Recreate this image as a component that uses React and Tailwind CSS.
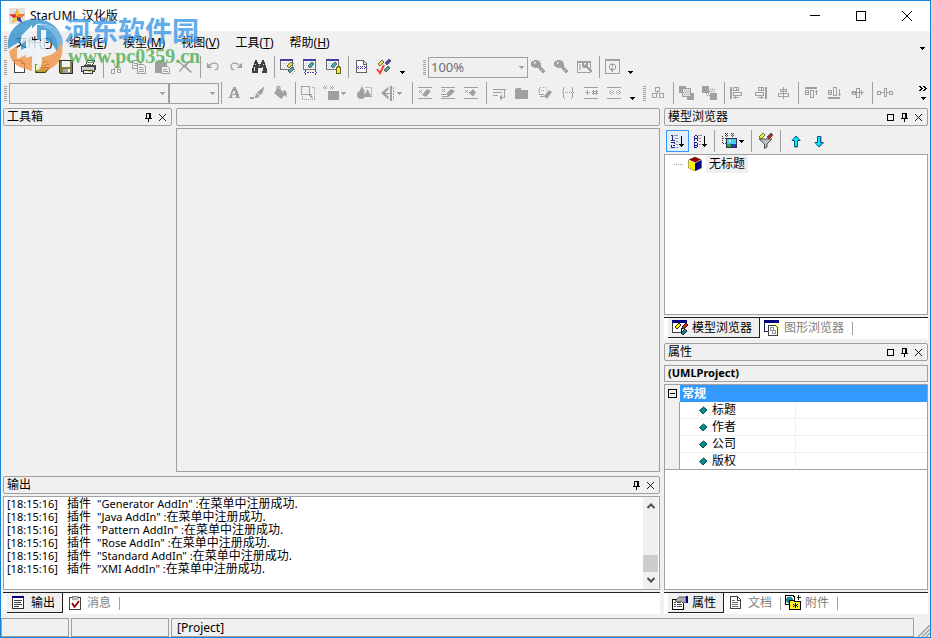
import React from "react";

const G = "#a0a0a0";
const UI = "font-['Noto_Sans','Noto_Sans_CJK_SC',sans-serif]";

function Ico({ children, w = 16, h = 16 }) {
  return (
    <svg width={w} height={h} viewBox={`0 0 ${w} ${h}`} shapeRendering="crispEdges" fill="none" className="block shrink-0" aria-hidden="true">
      {children}
    </svg>
  );
}

const Smooth = ({ children }) => <g shapeRendering="geometricPrecision">{children}</g>;
const Diamond = ({ x, y, r = 3, fill, stroke = "#484848" }) => (
  <path shapeRendering="geometricPrecision" d={`M${x - r} ${y + 1}L${x + 1} ${y - r}L${x + r} ${y - 1}L${x - 1} ${y + r}Z`} fill={fill} stroke={stroke} strokeWidth="0.8" />
);
const WindowBase = () => (
  <>
    <path d="M1 0h13v11h-13z" fill="#f4f4f4" />
    <path d="M1.500 0.500h12v10h-12z" stroke="#707070" />
    <path d="M1 0h13v2h-13z" fill="#4040a8" />
    <path d="M3 4.500h9M2 6.500h10M3 8.500h9" stroke="#c8c8c8" strokeDasharray="1 1" />
  </>
);
const TwoBars = () => <path d="M1 2.500h14M1 13.500h14" stroke={G} />;

const icons = {
  new: <path d="M3.500 1.500h7l3 3v9h-10zM10.500 1.500v3h3" fill="#fff" stroke="#404040" />,
  open: (
    <>
      <path d="M1 5h4l1 1h6v3H5l-3 5H1z" fill="#ffffa0" />
      <path d="M1.500 13V5.500h3l1 1h6V9" stroke="#808040" />
      <Smooth><path d="M1.500 13.500L5.500 8.500h10l-4 5z" fill="#a0a030" stroke="#404010" /></Smooth>
      <path d="M9 3.500h1M10 2.500h3M13 3.500h1M14 4.500h1M12 5.500h3" stroke="#505050" />
    </>
  ),
  save: (
    <>
      <path d="M2.500 1.500h13v13h-12l-1-1z" fill="#808038" stroke="#303030" />
      <path d="M5 2h8v6H5z" fill="#f4f4f4" />
      <path d="M6 10h7v4H6z" fill="#a0a0a0" />
      <path d="M11 10h2v3h-2z" fill="#fff" />
    </>
  ),
  print: (
    <>
      <path d="M5.500 6.500l2-5h7l-2 5z" fill="#fff" stroke="#404040" />
      <path d="M8 3.500h4M7 5.500h4" stroke="#707070" />
      <path d="M1.500 7.500h13v5h-13z" fill="#c8c8c8" stroke="#404040" />
      <path d="M3.500 6.500h12v4l-2 3" stroke="#404040" />
      <path d="M3.500 11.500h9v3h-9z" fill="#eee" stroke="#404040" />
      <path d="M8 12.500h3" stroke="#d8d020" />
    </>
  ),
  cut: (
    <>
      <path d="M5.500 1v3M6.500 4v3M10.500 1v3M9.500 4v3M7.500 7v2M8.500 7v2M6 9.500h1M9 9.500h1" stroke={G} />
      <path d="M3.500 10.500h3v4h-3zM9.500 10.500h3v3h-3z" stroke={G} />
    </>
  ),
  copy: (
    <>
      <path d="M1.500 1.500h6l2 2v6h-8zM3 4.500h4M3 6.500h5" stroke={G} />
      <path d="M6.500 5.500h6l2 2v7h-8z" fill="#f0f0f0" stroke={G} />
      <path d="M8 8.500h4M8 10.500h5M8 12.500h5" stroke={G} />
    </>
  ),
  paste: (
    <>
      <path d="M1 3h3V1h6v2h3v11H1z" fill={G} />
      <path d="M5 3.500h4" stroke="#eee" />
      <path d="M7.500 7.500h6l2 2v5h-8z" fill="#f0f0f0" stroke={G} />
      <path d="M9 10.500h4M9 12.500h5" stroke={G} />
    </>
  ),
  del: <Smooth><path d="M2 2l5 4 6-5 1 1-5 5 6 6-1 1-7-6-4 5-1-1 4-5-5-4z" fill={G} /></Smooth>,
  undo: (
    <>
      <path d="M3 5h1v2h1v1h2v1H2V4h1z" fill={G} />
      <Smooth><path d="M4.500 7.500c2-5 9-4 8.500 0 0 1.500-1 3-3 3.500" stroke={G} strokeWidth="1.200" /></Smooth>
    </>
  ),
  redo: (
    <>
      <path d="M13 5h-1v2h-1v1H9v1h5V4h-1z" fill={G} />
      <Smooth><path d="M11.500 7.500c-2-5-9-4-8.500 0 0 1.500 1 3 3 3.500" stroke={G} strokeWidth="1.200" /></Smooth>
    </>
  ),
  find: (
    <>
      <path d="M4 1h2v2h1v2h3V3h1V1h2v2h1v3h1v3h1v5h-5V9H7v5H1V9h1V6h1V3h1z" fill="#404040" />
      <path d="M4 5h1v1H4zM12 5h1v1h-1zM3 8h1v4H3zM11 8h1v4h-1zM8 6h1v1H8z" fill="#e0e0e0" />
    </>
  ),
  win1: (
    <>
      <WindowBase />
      <Diamond x={11} y={6} r={3} fill="#e8e040" />
      <Diamond x={12} y={11} r={3} fill="#40b0b0" />
      <path d="M14 4h1v1h-1zM15 6h1v1h-1zM14 8h1v1h-1zM15 10h1v1h-1zM15 12h1v1h-1zM13 14h1v1h-1z" fill="#909090" />
    </>
  ),
  win2: (
    <>
      <WindowBase />
      <Diamond x={9} y={6} r={3} fill="#40b0b0" />
      <path d="M1 10h15v6H1z" fill="#f0f0f0" />
      <path d="M1 10.500h13" stroke="#707070" />
      <path d="M3.500 11v2M3.500 14v2M13.500 11v2M13.500 14v2M5 13.500h2M8 13.500h1M10 13.500h2M2 13.500h1M14 13.500h1" stroke="#4040a8" />
    </>
  ),
  win3: (
    <>
      <WindowBase />
      <Diamond x={9} y={6} r={3} fill="#40b0b0" />
      <path d="M11.500 9.500l1-2h2l1 2v5h-4z" fill="#f0e840" stroke="#606020" />
    </>
  ),
  code: (
    <>
      <path d="M3.500 1.500h7l3 3v9h-10zM10.500 2v3h3" fill="#fff" stroke="#606060" />
      <path d="M4 8.500h1M5 7.500h1M5 9.500h1M7 7.500h1M7 9.500h1M8 8.500h1M9 7.500h1M9 9.500h1M11 7.500h1M11 9.500h1M12 8.500h1" stroke="#4040a8" />
    </>
  ),
  check: (
    <>
      <Diamond x={5} y={4} r={3} fill="#e8e040" />
      <Diamond x={12} y={3} r={3} fill="#4848b8" />
      <Diamond x={11} y={10} r={3} fill="#40a8a8" />
      <Smooth><path d="M1 10l3 4L8 6" stroke="#f04040" strokeWidth="2" /></Smooth>
    </>
  ),
  zoomIn: (
    <>
      <path d="M4 1h4v1h2v2h1v4h1v1h1v1h1v1h1v2h-1v1h-2v-1h-1v-1h-1v-1H9V9H4V8H2V7H1V3h1V2h2z" fill={G} />
      <path d="M4 3h2v1H5v1H4zM11 11h1v1h-1z" fill="#f0f0f0" />
    </>
  ),
  zoomFit: (
    <>
      <path d="M1.500 2.500h13v11h-13z" fill="#f0f0f0" stroke={G} />
      <path d="M1 2h14v2H1z" fill={G} />
      <path d="M7 3h4v1h1v4h1v1h1v1h1v1h1v2h-2v-1h-1v-1h-1v-1h-1V9H7V8H6V4h1z" fill={G} />
      <path d="M8 4h2v1H9v1H8z" fill="#f0f0f0" />
      <path d="M3 5h2v6H3z" fill="#c4c4c4" />
    </>
  ),
  refresh: (
    <>
      <path d="M1.500 0.500h14v14h-14zM2 1.500h13" stroke={G} />
      <path d="M6 5.500h5M11.500 6v4M5.500 6v4M8 4.500h1M8.500 3.500v4M6 10.500h5M8.500 9v4M7.500 9v3" stroke={G} />
    </>
  ),
  fontA: (
    <>
      <path d="M7 2h3v2h1v2h1v3h1v3h1v1H9v-1h1v-2H6v2h1v1H2v-1h2V9h1V6h1V4h1z" fill={G} />
      <path d="M7 6h2v3H6V8h1z" fill="#f0f0f0" />
    </>
  ),
  brush: <Smooth><path d="M15.500 1L13.500 8l-5 5H5.500l2-5zM1 12h4v2H1z" fill={G} /><path d="M7.500 8l4 3" stroke="#eee" /></Smooth>,
  fill: <Smooth><path d="M6 3l8 6-5 5-7-6z" fill={G} /><path d="M5 8V3c0-2 3-2 3 0v4" stroke={G} strokeWidth="1.300" /><path d="M11 5c4 0 4 3 3.500 8l-2-4z" fill={G} /></Smooth>,
  select: (
    <>
      <path d="M1.500 1.500h8v8h-8z" stroke={G} />
      <path d="M12 2.500h3M14.500 3v12M2.500 11v4M2 14.500h13" stroke={G} strokeDasharray="1 1" />
      <path d="M9 9h3v1h-1v1h1v1h1v1h-2v-1h-1v-1H9z" fill={G} />
    </>
  ),
  stereo: (
    <>
      <path d="M1 1h1v1H1zM3 1h1v1H3zM0 2h1v1H0zM2 2h1v1H2zM1 3h1v1H1zM3 3h1v1H3zM7 1h1v1H7zM9 1h1v1H9zM8 2h1v1H8zM10 2h1v1h-1zM7 3h1v1H7zM9 3h1v1H9z" fill={G} />
      <path d="M5 6h11v9H5z" fill={G} />
    </>
  ),
  shapes: (
    <Smooth>
      <path d="M6 1l3 6H3z" fill={G} /><circle cx="5" cy="10" r="4" fill={G} />
      <path d="M9.500 2.500h6v9h-6" stroke={G} strokeDasharray="2 1" /><path d="M11.500 4l4 8H8z" fill={G} />
    </Smooth>
  ),
  flip: (
    <>
      <path d="M11 1h2v15h-2z" fill={G} />
      <path d="M14.500 2v13" stroke={G} strokeDasharray="2 1" />
      <Smooth><path d="M9.500 1.500v3L6 8l3.500 3.500v3L2 8z" fill={G} /></Smooth>
      <path d="M6 8.500h5" stroke={G} />
    </>
  ),
  line1: <><TwoBars /><path d="M2 5h1v1H2zM4 5h1v1H4zM3 6h1v1H3zM2 7h1v1H2zM4 7h1v1H4z" fill={G} /><Smooth><path d="M5 10L10 4l4 2-5 6z" fill={G} /></Smooth></>,
  line2: <><TwoBars /><path d="M2 4h1v1H2zM4 4h1v1H4zM3 5h1v1H3zM2 6h1v1H2zM4 6h1v1H4zM1 9h5v1H1zM2 11h6v1H2z" fill={G} /><Smooth><path d="M6 9l5-5 4 2-6 6z" fill={G} /></Smooth></>,
  line3: <><TwoBars /><path d="M2 5h1v1H2zM4 5h1v1H4zM3 6h1v1H3zM2 7h1v1H2zM4 7h1v1H4zM6 7h1v1H6z" fill={G} /><Smooth><path d="M10 4l3 3.500-3 4-4-3.500z" fill={G} /></Smooth></>,
  wrap: <path d="M2 4.500h13M2 7.500h9M2 10.500h5M13.500 5v7M9 12.500h5M10.500 10v5M9.500 11v3" stroke={G} />,
  folder: <path d="M1 4h1V3h5v2h7v9H1z" fill={G} />,
  brace1: <><path d="M3 2h1v1H3zM2 3h1v2H2zM1 5h1v1H1zM2 6h1v2H2zM6 2h1v1H6zM8 2h1v1H8zM9 4h1v1H9zM4 5h1v1H4zM6 5h1v1H6zM2 9h5v1H2zM3 11h5v1H3z" fill={G} /><Smooth><path d="M7 11l5-6 3 2-5 7z" fill={G} /></Smooth></>,
  brace2: <><path d="M3.500 3v4M2 7.500h1M3.500 8v5M12.500 3v4M13 7.500h1M12.500 8v5M4 2.500h1M11 2.500h1M4 13.500h1M11 13.500h1" stroke={G} /><path d="M5 7.500h7" stroke={G} strokeDasharray="1 1" /></>,
  plusHash: <><TwoBars /><path d="M2 7.500h5M4.500 5v5M9 6.500h6M9 8.500h6M10.500 5v5M13.500 5v5" stroke={G} /></>,
  angles: <><TwoBars /><path d="M5 5.500h1M4 6.500h1M3 7.500h1M4 8.500h1M5 9.500h1M7 6.500h1M6 7.500h1M7 8.500h1M10 6.500h1M11 7.500h1M10 8.500h1M12 5.500h1M13 6.500h1M14 7.500h1M13 8.500h1M12 9.500h1" stroke={G} /></>,
  boxes: <path d="M5.500 2.500h4v4h-4zM2.500 8.500h4v4h-4zM9.500 8.500h4v4h-4zM7.500 7v2" stroke={G} />,
  front: (
    <>
      <path d="M1 1h7v7H1zM9 8h7v7H9z" fill={G} />
      <path d="M4 4h9v8H4z" fill="#e4e4e4" /><path d="M4 5.500h9M5 7.500h8M4 9.500h9M5 11.500h8" stroke={G} strokeDasharray="1 1" /><path d="M4.500 3.500h8v8h-8z" stroke={G} />
    </>
  ),
  back: (
    <>
      <path d="M5 3h9v9H5z" fill="#e4e4e4" /><path d="M5 4.500h9M6 6.500h8M5 8.500h9M6 10.500h8" stroke={G} strokeDasharray="1 1" />
      <path d="M1 1h7v7H1zM9 8h7v7H9z" fill={G} />
    </>
  ),
  alLeft: <><path d="M1 2h2v12H1z" fill={G} /><path d="M4.500 2.500h5v3h-5zM7 2v4M4.500 7.500h8v3h-8zM4 12.500h6M6.500 11v3" stroke={G} /></>,
  alRight: <><path d="M13 2h2v12h-2z" fill={G} /><path d="M6.500 2.500h5v3h-5zM9 2v4M3.500 7.500h8v3h-8zM6 12.500h6M9.500 11v3" stroke={G} /></>,
  alCenter: <path d="M8.500 2v12M5.500 4.500h6v2h-6zM3.500 8.500h10v3h-10z" stroke={G} />,
  alTop: <><path d="M2 2h12v2H2z" fill={G} /><path d="M2.500 5.500h3v4h-3zM2 7h4M7.500 5.500h3v7h-3zM13.500 5v5M12 6.500h3" stroke={G} /></>,
  alBottom: <><path d="M2 12h12v2H2z" fill={G} /><path d="M2.500 5.500h3v4h-3zM2 7.500h4M7.500 2.500h3v8h-3zM13.500 4v7M12 9.500h3" stroke={G} /></>,
  alMid: <path d="M2 7.500h13M3.500 6.500h3v3h-3zM7.500 3.500h3v9h-3zM12.500 5v5" stroke={G} />,
  space: <path d="M0.500 6.500h3v3h-3zM4 7.500h3M7.500 3.500h2v8h-2zM10 7.500h2M12.500 6.500h3v3h-3z" stroke={G} />,
  sortNum: (
    <>
      <path d="M3 2.500h2M4.500 2v5M3 7.500h4M3 9.500h3M6.500 9v2M4.500 12h2M3.500 12v3M3 14.500h4" stroke="#202090" />
      <path d="M6 2.500h4M7 5.500h3M8 8.500h2M8 11.500h2M8 14.500h2" stroke="#909090" />
      <path d="M13.500 3v11M11 11.500h5M12 12.500h3" stroke="#000" />
    </>
  ),
  sortAlpha: (
    <>
      <path d="M3.500 3v5M6.500 3v5M4 2.500h2M4 5.500h2M3.500 9v6M4 9.500h2M4 12.500h2M4 14.500h2M6.500 10v4" stroke="#202090" />
      <path d="M7 2.500h4M8 5.500h2M8 8.500h2M8 11.500h2" stroke="#909090" />
      <path d="M13.500 3v11M11 11.500h5M12 12.500h3" stroke="#000" />
    </>
  ),
  image: (
    <>
      <path d="M4 0h1v1H4zM6 0h1v1H6zM5 1h1v1H5zM4 2h1v1H4zM6 2h1v1H6zM5 3h1v1H5zM10 0h1v1h-1zM12 0h1v1h-1zM11 1h1v1h-1zM10 2h1v1h-1zM12 2h1v1h-1zM11 3h1v1h-1z" fill="#404040" />
      <path d="M1.500 3v8M2 5.500h3M2 10.500h3" stroke="#404040" strokeDasharray="1 1" />
      <path d="M5.500 5.500h10v9h-10z" fill="#40d0f8" stroke="#303050" />
      <path d="M6 11h9v3H6z" fill="#30a050" /><path d="M10 11h5v3h-5z" fill="#2040b0" /><path d="M8 7h2v2H8z" fill="#f8f060" />
    </>
  ),
  filter: (
    <>
      <Diamond x={5} y={3} r={3} fill="#f8f020" /><Diamond x={13} y={3} r={3} fill="#c02020" />
      <Smooth><path d="M2 6h13L10 11v3L7.500 15.500V11z" fill="#c0c0c0" stroke="#404040" strokeWidth="0.900" /></Smooth>
    </>
  ),
  up: <><path d="M10 4h1v3h2v1h-3v7H6v-1h4z" fill="#b0b0b0" /><Smooth><path d="M8 3l4 4.500H9.500v6h-3v-6H4z" fill="#00f0f8" stroke="#004080" strokeWidth="0.900" /></Smooth></>,
  down: <><path d="M10 3h1v6h2v2h-2v2h-1z" fill="#b0b0b0" /><Smooth><path d="M8 14L4 9.500h2.500v-6h3v6H12z" fill="#00f0f8" stroke="#004080" strokeWidth="0.900" /></Smooth></>,
  cube: (
    <Smooth>
      <path d="M8 1l6 2.500L8 6.500 2 3.500z" fill="#900000" /><path d="M1.500 4L8 7v8l-6.500-3z" fill="#f8f000" /><path d="M14.500 4L8 7v8l6.500-3z" fill="#000080" />
      <path d="M1.500 4L8 1l6.500 3v8L8 15l-6.500-3z" stroke="#404020" strokeWidth="0.400" />
    </Smooth>
  ),
  model: (
    <>
      <path d="M0 0h15v3H0z" fill="#000080" /><path d="M0.500 3v9h8" stroke="#404040" /><path d="M1 3h13v9H1z" fill="#fff" />
      <Diamond x={6} y={6} r={3} fill="#f8f000" stroke="#000" /><Diamond x={13} y={6} r={3} fill="#d02020" stroke="#000" /><Diamond x={12} y={12} r={3} fill="#009090" stroke="#000" />
      <path d="M9 8.500h2M9.500 9v3" stroke="#000" />
    </>
  ),
  diagram: (
    <>
      <path d="M0 0h15v3H0z" fill="#000080" /><path d="M0.500 3v8h4" stroke="#202060" /><path d="M8 4h7v8H8z" fill="#ffff90" />
      <path d="M4.500 5.500h7l2 2v8h-9z" fill="#fff" stroke="#404040" /><path d="M6.500 7.500h3v3h-3zM8.500 10.500h3v3h-3z" stroke="#909090" />
    </>
  ),
  props: (
    <>
      <path d="M0.500 4.500h11v10h-11z" fill="#fff" stroke="#000" /><path d="M2 7.500h2M5 7.500h4M2 9.500h2M5 9.500h5M2 11.500h2M5 11.500h5" stroke="#404040" />
      <Smooth><path d="M3 6l4-4h7v5l-3 1-2-2-2 1z" fill="#b0b0b0" stroke="#404040" strokeWidth="0.800" /></Smooth><path d="M14 1h2v7h-2z" fill="#000080" />
    </>
  ),
  doc: <><path d="M2.500 1.500h7l3 3v9h-10zM9.500 2v3h3" fill="#fff" stroke="#404040" /><path d="M4 5.500h3M4 7.500h6M4 9.500h6M4 11.500h6" stroke="#707070" /></>,
  attach: (
    <>
      <path d="M0.500 0.500h8l1 2v7h-9z" fill="#fff" stroke="#000" /><Smooth><circle cx="4.500" cy="5" r="3" fill="#2080d0" stroke="#208040" /></Smooth>
      <path d="M4.500 5.500h4l1 1h6v8h-11z" fill="#f8f020" stroke="#000" /><path d="M12 2.500h4M13.500 0v5" stroke="#000" />
      <path d="M8 9h1v1H8zM10 8h1v5h-1zM12 9h1v1h-1zM8 11h1v1H8zM12 11h1v1h-1zM9 10h3v1H9z" fill="#000080" />
    </>
  ),
  output: <><path d="M1.500 1.500h11v12h-11z" fill="#fff" stroke="#303030" /><path d="M1 1h12v2H1z" fill="#000080" /><path d="M3 5.500h8M3 7.500h7M3 9.500h8M3 11.500h5" stroke="#404040" /></>,
  message: <><path d="M2.500 2.500h11v12h-11z" fill="#fff" stroke="#404040" /><path d="M5 1h6v3H5z" fill="#c0c0c0" stroke="#606060" strokeWidth="0.500" /><Smooth><path d="M5 8l2.500 4L12 6" stroke="#900000" strokeWidth="1.800" /></Smooth></>,
};

const Down = ({ color = "#000" }) => (
  <Ico w={5} h={3}><path d="M0 0h5v1H4v1H3v1H2V2H1V1H0z" fill={color} /></Ico>
);

function Tool({ icon, label, active }) {
  return (
    <button type="button" aria-label={label} className={active ? "flex h-[22px] w-[23px] items-center border border-[#3399ff] bg-[#e4eef8] pl-px" : "flex h-6 w-[23px] items-center pl-[2px]"}>
      <Ico>{icons[icon]}</Ico>
    </button>
  );
}
const DropTool = ({ icon, label }) => (
  <button type="button" aria-label={label} className="flex h-6 w-[33px] items-center gap-[2px] pl-[2px]">
    <Ico>{icons[icon]}</Ico><Down color={G} />
  </button>
);
const Sep = () => <span className="flex h-[22px] w-[5px] justify-center"><i className="w-px bg-[#a0a0a0]" /></span>;
const Grip = () => <span className="mr-[2px] h-[15px] w-[3px] shrink-0 bg-[repeating-linear-gradient(#a0a0a0_0_1px,transparent_1px_2px)]" />;
const More = () => <button type="button" aria-label="更多按钮" className="flex h-6 w-[10px] items-end justify-center pb-[5px]"><Down /></button>;

function Combo({ label, value, className }) {
  return (
    <span className={`relative block h-[21px] ${className}`}>
      <select aria-label={label} className="block h-full w-full appearance-none border border-[#a0a0a0] bg-[#f0f0f0] pl-[2px] text-[13px] leading-[17px] text-[#6d6d6d]">
        <option>{value}</option>
      </select>
      <span className="pointer-events-none absolute top-[9px] right-1"><Down color={G} /></span>
    </span>
  );
}
const Tools = ({ items }) => items.map((t) => <Tool key={t[0]} icon={t[0]} label={t[1]} />);

function PanelHead({ title, max, plain }) {
  return (
    <div className="flex h-[18px] shrink-0 items-center rounded-[2px] border border-[#a0a0a0] pr-1 pl-[3px] text-xs leading-4">
      <h2 className="flex-1">{title}</h2>
      {!plain && (
        <span className="flex items-center gap-[5px]">
          {max && <button type="button" aria-label="最大化"><Ico w={9} h={9}><path d="M1.500 1.500h6v6h-6z" stroke="#000" /></Ico></button>}
          <button type="button" aria-label="自动隐藏"><Ico w={9} h={9}><path d="M2 0.500h5M2.500 0v5M5.500 0v5M6.500 0v5M1 5.500h7M4.500 6v3" stroke="#000" /></Ico></button>
          <button type="button" aria-label="关闭"><Ico w={9} h={9}><path shapeRendering="geometricPrecision" d="M1 1l7 7M8 1l-7 7" stroke="#000" strokeWidth="0.900" /></Ico></button>
        </span>
      )}
    </div>
  );
}

function Tabs({ label, tabs }) {
  return (
    <div role="tablist" aria-label={label} className="flex h-[22px] shrink-0 border-t border-[#202020] bg-white pl-1 text-xs">
      {tabs.map(([icon, text], i) =>
        i === 0 ? (
          <button key={text} type="button" role="tab" aria-selected="true" className="flex h-5 items-center gap-1 border-r border-b border-[#202020] bg-[#f0f0f0] pr-[7px] pl-1"><Ico>{icons[icon]}</Ico>{text}</button>
        ) : (
          <button key={text} type="button" role="tab" aria-selected="false" className="flex h-5 items-center gap-1 pl-1 text-[#808080]"><Ico>{icons[icon]}</Ico><span className="flex h-[13px] items-center border-r border-[#a0a0a0] pr-2">{text}</span></button>
        )
      )}
    </div>
  );
}

const menus = [["文件", "F"], ["编辑", "E"], ["模型", "M"], ["视图", "V"], ["工具", "T"], ["帮助", "H"]];
const addins = ["Generator", "Java", "Pattern", "Rose", "Standard", "XMI"];

function Watermark() {
  return (
    <div className="pointer-events-none absolute top-[11px] left-[5px] flex opacity-80" aria-hidden="true">
      <svg width="58" height="62" viewBox="0 0 58 62" className="shrink-0">
        <path d="M2 37C0 20 12 7 29 7c11 0 20 5 25 14-6-7-14-10-23-9L18 24v4L8 33z" fill="#2f8fcd" />
        <path d="M23 16l-8 8v14l8-4zM31 13c14 0 23 8 23 18 0 4-1 7-3 10-2-8-8-13-16-13h-4z" fill="#2f8fcd" />
        <path d="M56 25c2 7 0 14-4 19 0-8 0-15-4-21-4-6-10-9-17-10 11-3 21 2 25 12z" fill="#58a8dc" />
        <path d="M15 24l11-11v16h9V18h5v24c0 9-3 14-9 17V36h-5v9h-6V28l-5 5z" fill="#eaf5fc" />
        <path d="M3 39l8-5v13l9-4v14C10 55 4 49 3 39z" fill="#f09444" />
        <path d="M20 46l6-2v15l-6-2zM36 45c10-1 17-6 19-15 5 15-4 28-22 30 2-4 3-9 3-15z" fill="#f09444" />
      </svg>
      <div className="flex flex-col pt-[2px] whitespace-nowrap">
        <span className="font-['Noto_Sans_CJK_SC',sans-serif] text-[27px] leading-[31px] font-bold text-[#3d9be6]">河东软件园</span>
        <span className="pl-1 font-['Liberation_Serif',serif] text-[20px] leading-[22px] font-bold text-[#4fae50]">www.pc0359.cn</span>
      </div>
    </div>
  );
}

export default function App() {
  return (
    <div className={`relative flex h-screen flex-col overflow-hidden border border-[#1883d7] bg-[#f0f0f0] text-black ${UI}`}>
      <header className="flex h-[30px] shrink-0 items-center bg-white pl-2">
        <span className="bg-[#e4e0e0]">
          <Ico><Smooth>
            <path d="M8 1l2 5 6 .5-4.500 3.500L13 15l-5-3-5 3 1.500-5L0 6.500 6 6z" fill="#e03030" />
            <path d="M8 1L6 6l2 3 2-3z" fill="#f8c020" /><path d="M16 6.500L10 6l-2 3 3.500 1z" fill="#f08020" /><path d="M3 15l5-3v-3l-3.500 1z" fill="#f8d030" /><path d="M13 15l-5-3v-3l3.500 1z" fill="#4040a0" />
          </Smooth></Ico>
        </span>
        <h1 className="flex-1 pl-[5px] text-xs">StarUML 汉化版</h1>
        <button type="button" aria-label="最小化" className="flex h-full w-[46px] items-center justify-center"><Ico w={10} h={10}><path d="M0 4.500h10" stroke="#000" /></Ico></button>
        <button type="button" aria-label="最大化" className="flex h-full w-[46px] items-center justify-center"><Ico w={10} h={10}><path d="M0.500 0.500h9v9h-9z" stroke="#000" /></Ico></button>
        <button type="button" aria-label="关闭" className="flex h-full w-[46px] items-center justify-center"><Ico w={10} h={10}><path shapeRendering="geometricPrecision" d="M0 0l10 10M10 0L0 10" stroke="#000" /></Ico></button>
      </header>

      <nav aria-label="主菜单" className="flex h-6 shrink-0 items-center pr-[3px] pl-[3px] text-xs">
        <Grip />
        <div className="flex flex-1 gap-4 pl-[6px]">
          {menus.map(([name, key]) => <button key={key} type="button" className="min-w-[38px] text-left whitespace-nowrap">{name}(<u>{key}</u>)</button>)}
        </div>
        <More />
      </nav>

      <div role="toolbar" aria-label="标准" className="flex h-6 shrink-0 items-center pl-[3px]">
        <Grip />
        <Tools items={[["new", "新建"], ["open", "打开"], ["save", "保存"], ["print", "打印"]]} /><Sep />
        <Tools items={[["cut", "剪切"], ["copy", "复制"], ["paste", "粘贴"], ["del", "删除"]]} /><Sep />
        <Tools items={[["undo", "撤销"], ["redo", "重做"], ["find", "查找"]]} /><Sep />
        <Tools items={[["win1", "元素"], ["win2", "约束"], ["win3", "标记值"]]} /><Sep />
        <Tools items={[["code", "文档"], ["check", "验证模型"]]} /><More />
        <span className="w-4" />
        <Grip />
        <Combo label="缩放" value="100%" className="w-[100px]" />
        <Tool icon="zoomIn" label="放大" /><Tool icon="zoomIn" label="缩小" /><Tool icon="zoomFit" label="适合窗口" /><Sep />
        <Tool icon="refresh" label="刷新" /><More />
      </div>

      <div role="toolbar" aria-label="格式" className="flex h-7 shrink-0 items-center pr-[2px] pl-[3px]">
        <Grip />
        <Combo label="字体" value="" className="w-[160px]" />
        <Combo label="字号" value="" className="w-[50px]" /><Sep />
        <Tools items={[["fontA", "字体"], ["brush", "线条颜色"], ["fill", "填充颜色"]]} /><Sep />
        <Tool icon="select" label="自动调整" /><DropTool icon="stereo" label="构造型显示" /><Tool icon="shapes" label="形状" /><DropTool icon="flip" label="线型" /><Sep />
        <Tools items={[["line1", "隐藏属性"], ["line2", "隐藏操作"], ["line3", "隐藏文字"]]} /><Sep />
        <Tools items={[["wrap", "自动换行"], ["folder", "显示父级"], ["brace1", "显示操作"], ["brace2", "显示特性"], ["plusHash", "显示可见性"], ["angles", "显示构造型"]]} /><More />
        <span className="w-[6px]" />
        <Grip />
        <Tool icon="boxes" label="自动布局" /><Sep />
        <Tools items={[["front", "置于顶层"], ["back", "置于底层"]]} /><Sep />
        <Tools items={[["alLeft", "左对齐"], ["alRight", "右对齐"], ["alCenter", "水平居中"]]} /><Sep />
        <Tools items={[["alTop", "顶端对齐"], ["alBottom", "底端对齐"], ["alMid", "垂直居中"]]} /><Sep />
        <Tool icon="space" label="等间距" />
        <button type="button" aria-label="更多工具" className="ml-auto flex flex-col items-center gap-[5px]">
          <Ico w={9} h={6}><path d="M0 0.500h2M1 1.500h2M2 2.500h2M1 3.500h2M0 4.500h2M4 0.500h2M5 1.500h2M6 2.500h2M5 3.500h2M4 4.500h2" stroke="#000" /></Ico><Down />
        </button>
      </div>

      <div className="flex min-h-0 flex-1 gap-1 px-[2px] pt-px pb-1">
        <div className="flex min-w-0 flex-1 flex-col gap-1">
          <div className="flex min-h-0 flex-1 gap-1">
            <aside className="w-[169px] shrink-0"><PanelHead title="工具箱" /></aside>
            <main className="flex min-w-0 flex-1 flex-col gap-[2px]">
              <PanelHead title="" plain />
              <div className="flex-1 border border-[#a0a0a0]" />
            </main>
          </div>
          <section className="flex h-[138px] shrink-0 flex-col">
            <PanelHead title="输出" />
            <div className="mt-[2px] mb-[2px] flex min-h-0 flex-1 border border-[#a0a0a0] bg-white">
              <ol className="flex-1 overflow-hidden pl-[3px] text-[11px] leading-[13px]">
                {addins.map((name) => (
                  <li key={name} className="flex h-[13px] whitespace-nowrap">
                    <span className="w-[60px]">[18:15:16]</span>
                    <span className="w-[30px] text-xs leading-[13px]">插件</span>
                    <span>"{name} AddIn" :<span className="text-xs leading-[13px]">在菜单中注册成功.</span></span>
                  </li>
                ))}
              </ol>
              <div className="mr-px flex w-[15px] flex-col items-center bg-[#f0f0f0] py-[6px]">
                <Ico w={8} h={6}><path shapeRendering="geometricPrecision" d="M0.500 5L4 1.500 7.500 5" stroke="#505050" strokeWidth="2" /></Ico>
                <span className="flex-1" />
                <span className="mb-[5px] h-[17px] w-full bg-[#cdcdcd]" />
                <Ico w={8} h={6}><path shapeRendering="geometricPrecision" d="M0.500 1L4 4.500 7.500 1" stroke="#505050" strokeWidth="2" /></Ico>
              </div>
            </div>
            <Tabs label="输出" tabs={[["output", "输出"], ["message", "消息"]]} />
          </section>
        </div>

        <div className="flex w-[264px] shrink-0 flex-col gap-1">
          <section className="flex h-[231px] shrink-0 flex-col">
            <PanelHead title="模型浏览器" max />
            <div role="toolbar" aria-label="模型浏览器" className="flex h-7 shrink-0 items-center pt-[2px] pl-[2px]">
              <Tool icon="sortNum" label="按存储顺序排序" active /><Tool icon="sortAlpha" label="按字母排序" /><Sep />
              <button type="button" aria-label="构造型显示" className="flex h-6 w-8 items-center gap-[2px] pl-1"><Ico>{icons.image}</Ico><Down /></button><Sep />
              <span className="w-px" /><Tool icon="filter" label="筛选" /><Sep />
              <span className="w-[3px]" /><Tool icon="up" label="上移" /><Tool icon="down" label="下移" />
            </div>
            <ul role="tree" aria-label="模型" className="mb-[2px] flex-1 border border-[#a0a0a0] bg-white text-xs">
              <li role="treeitem" className="flex h-[18px] items-center pl-[9px]">
                <span className="h-px w-[10px] bg-[repeating-linear-gradient(90deg,#a0a0a0_0_1px,transparent_1px_2px)]" />
                <span className="px-[3px]"><Ico>{icons.cube}</Ico></span>
                <span className="h-[18px] bg-[#f0f0f0] px-[3px] leading-[18px]">无标题</span>
              </li>
            </ul>
            <Tabs label="浏览器" tabs={[["model", "模型浏览器"], ["diagram", "图形浏览器"]]} />
          </section>

          <section className="flex min-h-0 flex-1 flex-col">
            <PanelHead title="属性" max />
            <div className="mt-1 h-[17px] shrink-0 border border-[#a0a0a0] pl-[3px] text-[11px] leading-[14px] font-bold">(UMLProject)</div>
            <div className="mt-[2px] mb-[2px] min-h-0 flex-1 border border-[#a0a0a0] bg-white">
              <table className="w-full table-fixed border-separate border-spacing-0 text-xs">
                <colgroup><col className="w-[15px]" /><col className="w-[116px]" /><col /></colgroup>
                <tbody>
                  <tr className="h-[17px]">
                    <td className="bg-[#f0f0f0] p-0 pl-[3px]"><button type="button" aria-label="折叠" className="block"><Ico w={9} h={9}><path d="M0.500 0.500h8v8h-8zM2 4.500h5" stroke="#000" /></Ico></button></td>
                    <th colSpan={2} scope="rowgroup" className="bg-[#3399ff] p-0 pl-[2px] text-left leading-4 font-bold text-white">常规</th>
                  </tr>
                  {["标题", "作者", "公司", "版权"].map((name, i) => (
                    <tr key={name} className="h-[17px]">
                      <td className={i === 3 ? "border-r border-b border-[#a0a0a0] bg-[#f0f0f0] p-0" : "border-r border-[#a0a0a0] bg-[#f0f0f0] p-0"} />
                      <th scope="row" className={`border-r border-b border-r-[#f0f0f0] p-0 pl-[19px] text-left leading-4 font-normal ${i === 3 ? "border-b-[#a0a0a0]" : "border-b-[#f0f0f0]"}`}>
                        <span className="flex items-center gap-1"><Ico w={9} h={9}><Smooth><path d="M0.500 4.500l4-3.500 3.500 3-4 4z" fill="#009090" stroke="#003838" strokeWidth="0.900" /></Smooth></Ico>{name}</span>
                      </th>
                      <td className={`border-b p-0 ${i === 3 ? "border-b-[#a0a0a0]" : "border-b-[#f0f0f0]"}`} />
                    </tr>
                  ))}
                </tbody>
              </table>
            </div>
            <Tabs label="属性" tabs={[["props", "属性"], ["doc", "文档"], ["attach", "附件"]]} />
          </section>
        </div>
      </div>

      <footer className="flex h-[19px] shrink-0 gap-[2px] text-xs leading-[17px]">
        <div className="w-[68px] border border-[#a0a0a0]" />
        <div className="w-[98px] border border-[#a0a0a0]" />
        <div className="flex-1 border border-[#a0a0a0] pl-[5px]">[Project]</div>
        <div className="flex w-[14px] items-end justify-end"><svg width="12" height="12" viewBox="0 0 12 12" aria-hidden="true"><path d="M0 12L12 0M4 12l8-8M8 12l4-4" stroke={G} strokeWidth="1.500" /></svg></div>
      </footer>
      <Watermark />
    </div>
  );
}
